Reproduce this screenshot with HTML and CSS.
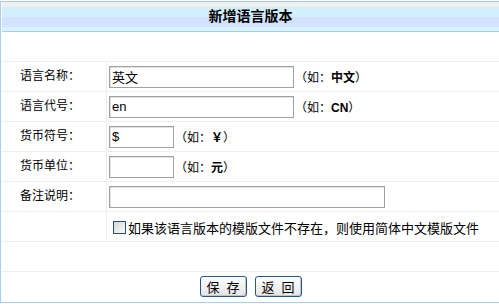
FILE: index.html
```html
<!DOCTYPE html>
<html lang="zh-CN">
<head>
  <meta charset="UTF-8">
  <title>新增语言版本</title>
  <link rel="stylesheet" href="styles.css">
</head>
<body>
  <div class="panel">
    <div class="panel-title">新增语言版本</div>
    <div class="blank"></div>

    <div class="row">
      <div class="label">语言名称：</div>
      <div class="field">
        <input class="text wide" type="text" value="英文">
        <span class="hint">（如：<b>中文</b>）</span>
      </div>
    </div>
    <div class="row">
      <div class="label">语言代号：</div>
      <div class="field">
        <input class="text wide" type="text" value="en">
        <span class="hint">（如：<b>CN</b>）</span>
      </div>
    </div>
    <div class="row">
      <div class="label">货币符号：</div>
      <div class="field">
        <input class="text short" type="text" value="$">
        <span class="hint">（如：<b>￥</b>）</span>
      </div>
    </div>
    <div class="row">
      <div class="label">货币单位：</div>
      <div class="field">
        <input class="text short" type="text" value="">
        <span class="hint">（如：<b>元</b>）</span>
      </div>
    </div>
    <div class="row">
      <div class="label">备注说明：</div>
      <div class="field">
        <input class="text long" type="text" value="">
      </div>
    </div>
    <div class="row">
      <div class="label"></div>
      <div class="field">
        <label class="check"><input type="checkbox">如果该语言版本的模版文件不存在，则使用简体中文模版文件</label>
      </div>
    </div>

    <div class="blank"></div>
    <div class="actions">
      <button class="btn" type="button">保 存</button>
      <button class="btn" type="button">返 回</button>
    </div>
  </div>
</body>
</html>
```

FILE: styles.css
```css
html, body {
  overflow: hidden;
}
body {
  margin: 0;
  font-family: "Liberation Sans", "Noto Sans CJK SC", sans-serif;
  font-size: 12px;
  color: #000;
  background: #fff;
}
.panel {
  box-sizing: border-box;
  width: 499px;
  margin-top: 1px;
  border: 1px solid #a8ccf1;
  border-right: none;
  padding-left: 1px;
}
.panel-title {
  height: 29px;
  line-height: 28px;
  border-bottom: 1px solid #a8ccf1;
  background: linear-gradient(to bottom, #f0f0f0 0, #f0f0f0 5px, #d3efff 5px, #d3efff 15px, #d3e3ff 15px, #d3e3ff 25px, #d6f3ff 25px, #d6f3ff 29px);
  text-align: center;
  font-size: 14px;
  font-weight: bold;
}
.blank {
  height: 29px;
  border-bottom: 1px solid #eeeeee;
}
.row {
  display: flex;
  height: 29px;
  border-bottom: 1px solid #eeeeee;
}
.label {
  box-sizing: border-box;
  width: 105px;
  padding-left: 18px;
  border-right: 1px solid #eeeeee;
  line-height: 29px;
}
.field {
  display: flex;
  align-items: center;
  padding-left: 2px;
}
.text {
  box-sizing: border-box;
  height: 22px;
  margin: 0;
  padding: 0 2px;
  border: 1px solid #a0a0a0;
  box-shadow: inset 1px 1px 0 #e2e2e2;
  font-family: "Liberation Sans", "Noto Sans CJK SC", sans-serif;
  font-size: 13px;
  color: #000;
  outline: none;
}
.wide {
  width: 185px;
}
.short {
  width: 65px;
}
.long {
  width: 276px;
}
.hint {
  margin-left: 1px;
}
.check {
  display: flex;
  align-items: center;
  padding-top: 2px;
  font-size: 13px;
}
.check input {
  appearance: none;
  -webkit-appearance: none;
  box-sizing: border-box;
  width: 13px;
  height: 13px;
  margin: 0 2px 0 4px;
  border: 1px solid #1c5180;
  background: linear-gradient(135deg, #d8d8d8, #fafafa);
}
.actions {
  display: flex;
  justify-content: center;
  gap: 8px;
  height: 30px;
  padding-top: 4px;
  box-sizing: border-box;
}
.btn {
  box-sizing: border-box;
  width: 47px;
  height: 21px;
  padding: 0;
  border: 1px solid #24588a;
  border-radius: 3px;
  background: linear-gradient(to bottom, #ffffff, #e4e4e4);
  box-shadow: inset -1px -1px 0 #c4c4c4;
  font-family: "Noto Sans CJK SC", sans-serif;
  font-size: 13px;
  word-spacing: 4px;
  color: #000;
  line-height: 18px;
}
```
